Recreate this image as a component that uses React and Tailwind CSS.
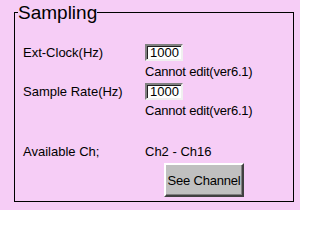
import React from "react";

export default function App() {
  return (
    <div
      className="w-[300px] h-[210px] bg-[#f6cdf6] pt-[3px] overflow-hidden text-black"
      style={{ fontFamily: '"Liberation Sans", Arial, sans-serif' }}
    >
      <fieldset className="ml-[14px] w-[280px] border border-solid border-black pl-[8px] pb-[4px]">
        <legend className="ml-[-5px] px-0 text-[19px] leading-[19px]">Sampling</legend>
        <div className="flex flex-col pt-[22px] text-[13px] leading-[15px]">
          <div className="flex">
            <div className="w-[122px] mt-[1px]">Ext-Clock(Hz)</div>
            <div className="flex flex-col">
              <input
                readOnly
                value="1000"
                className="w-[38px] h-[17px] bg-white border-2 border-solid border-t-[#808080] border-l-[#808080] border-b-[#f0f0f0] border-r-[#f0f0f0] shadow-[inset_1px_1px_0_#202020] pl-[3px] text-[13px] leading-[13px] outline-none"
              />
              <div className="mt-[3px] whitespace-nowrap tracking-[-0.2px]">Cannot edit(ver6.1)</div>
            </div>
          </div>
          <div className="flex mt-[4px]">
            <div className="w-[122px] mt-[1px]">Sample Rate(Hz)</div>
            <div className="flex flex-col">
              <input
                readOnly
                value="1000"
                className="w-[38px] h-[17px] bg-white border-2 border-solid border-t-[#808080] border-l-[#808080] border-b-[#f0f0f0] border-r-[#f0f0f0] shadow-[inset_1px_1px_0_#202020] pl-[3px] text-[13px] leading-[13px] outline-none"
              />
              <div className="mt-[3px] whitespace-nowrap tracking-[-0.2px]">Cannot edit(ver6.1)</div>
            </div>
          </div>
          <div className="flex mt-[26px]">
            <div className="w-[122px]">Available Ch;</div>
            <div>Ch2 - Ch16</div>
          </div>
          <div className="flex mt-[4px]">
            <div className="w-[141px]" />
            <button className="w-[80px] h-[34px] p-0 bg-[#c0c0c0] border-2 border-solid border-t-white border-l-white border-b-[#404040] border-r-[#404040] shadow-[inset_-1px_-1px_0_#808080] text-[13px] leading-[15px] tracking-[-0.2px] text-black">
              See Channel
            </button>
          </div>
        </div>
      </fieldset>
    </div>
  );
}
